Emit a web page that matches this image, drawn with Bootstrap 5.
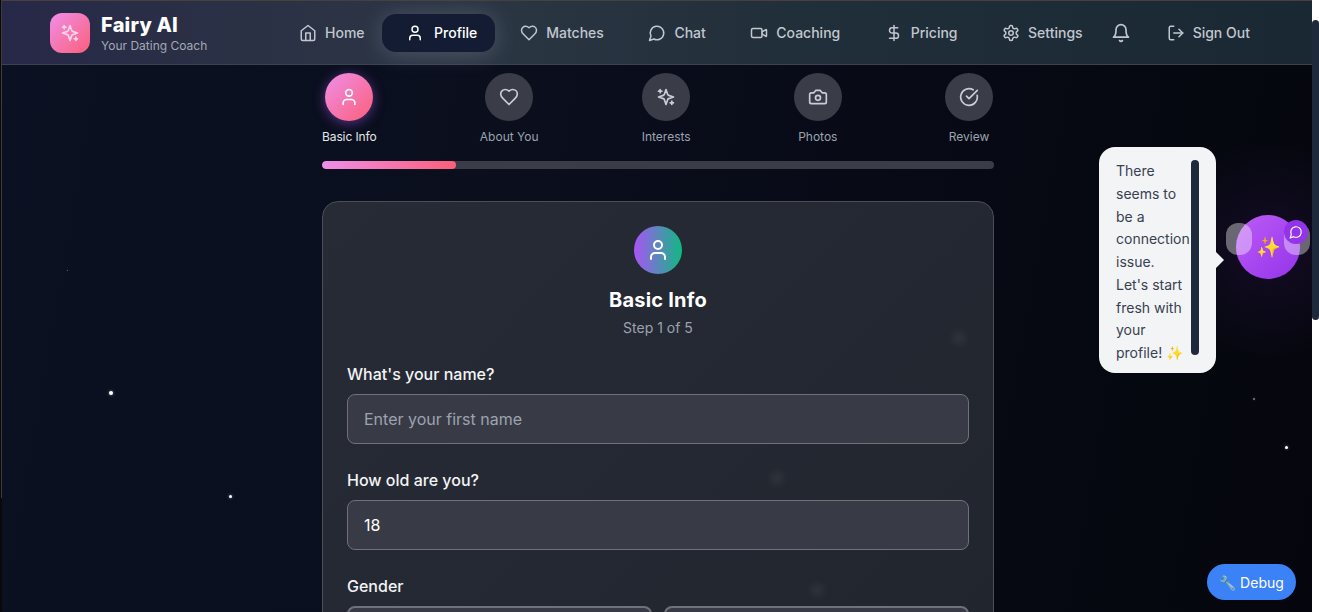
<!DOCTYPE html>
<html lang="en">
<head>
    <meta charset="UTF-8">
    <meta name="viewport" content="width=device-width, initial-scale=1.0">
    <title>Fairy AI</title>
    <link href="https://cdn.jsdelivr.net/npm/bootstrap@5.3.3/dist/css/bootstrap.min.css" rel="stylesheet">
    <style>
        html, body { height: 100%; overflow: hidden; }
        body {
            font-family: Inter, "Liberation Sans", sans-serif;
            background: linear-gradient(#3d3d3d, #3d3d3d) 1px 0 / 1px 498px no-repeat, #09090b;
            color: #fff;
        }
        .lucide { fill: none; stroke: currentColor; stroke-width: 2; stroke-linecap: round; stroke-linejoin: round; flex-shrink: 0; }
        .app-shell {
            position: relative;
            margin-left: 2px;
            width: 1312px;
            height: 612px;
            overflow: hidden;
            background:
                radial-gradient(circle at 1268px 250px, rgba(147, 51, 234, .1), transparent 110px),
                linear-gradient(100deg, #0b1122 0%, #0a0e1d 40%, #070a14 70%, #05060d 100%);
        }
        .top-bar {
            position: relative;
            z-index: 5;
            height: 65px;
            padding-left: 48px;
            border-top: 1px solid #4a3f3f;
            border-bottom: 1px solid #3d434e;
            background: linear-gradient(90deg, #272848 0%, #2a3045 16%, #2c3644 35%, #212f3a 60%, #1a2833 100%);
        }
        .brand-box { width: 226.75px; }
        .brand-logo {
            width: 40px; height: 40px; border-radius: 12px; margin-right: 3px;
            background: linear-gradient(135deg, #f08ee8, #fb5f7a);
            color: #fdd4ea;
        }
        .brand-name { margin-top: 1px; font-size: 20px; font-weight: 800; line-height: 24px; letter-spacing: .2px; }
        .brand-sub { margin-top: 1px; font-size: 12px; line-height: 16px; color: #a4a9b4; }
        .top-link {
            padding: 0 22.25px; height: 38px; gap: 8px;
            color: #c2c7cf; font-size: 14px; font-weight: 500;
        }
        .top-link.active {
            margin: 0 2.75px 0 -4.75px; padding: 0 18px 0 24px; gap: 10px;
            color: #fff; background: #131c32; border-radius: 14px;
            box-shadow: 0 2px 22px rgba(148, 163, 184, .32);
        }
        .top-bell { margin-right: 13.75px; padding: 0 0 0 5.75px; }
        .page-column { width: 672px; margin-left: 320px; padding-top: 8px; }
        .step-row { padding-right: 1px; }
        .step-dot {
            width: 48px; height: 48px; border-radius: 50%;
            background: #3a3d48; color: #c9ced6;
        }
        .step-item.current .step-dot {
            background: linear-gradient(135deg, #f08ee8, #fb5f7a); color: #fff;
            box-shadow: 0 2px 12px rgba(168, 85, 247, .5);
        }
        .step-name { margin-top: 8px; font-size: 12px; line-height: 16px; color: #9ca3af; }
        .step-item.current .step-name { color: #e5e7eb; letter-spacing: -.1px; }
        .step-progress { height: 8px; margin-top: 16px; background: #3a3d48; border-radius: 4px; }
        .step-progress .progress-bar { background: linear-gradient(90deg, #f08ee8, #fb5f7a); border-radius: 4px; }
        .form-panel {
            margin-top: 32px; padding: 24px; height: 700px;
            background: linear-gradient(135deg, #272b36, #20242c);
            border: 1px solid #4b4e58; border-radius: 16px; color: #fff;
            position: relative; z-index: 1;
        }
        .panel-icon { width: 48px; height: 48px; border-radius: 50%; background: linear-gradient(90deg, #a855f7, #10b981); }
        .panel-title { margin: 12px 0 0; font-size: 20px; font-weight: 700; line-height: 28px; letter-spacing: .2px; }
        .panel-step { margin-top: 4px; font-size: 14px; line-height: 20px; color: #9ca3af; }
        .field-group { margin-top: 24px; }
        .field-group .form-label { margin-bottom: 8px; font-weight: 500; line-height: 24px; color: #f3f4f6; }
        .field-group .form-control {
            height: 50px; padding: 12px 16px;
            background: #383b45; border: 1px solid #6f727b; border-radius: 8px;
            color: #fff; font-size: 16px;
        }
        .field-group .form-control::placeholder { color: #9ca3af; }
        .gender-row { gap: 12px; }
        .gender-btn { height: 50px; background: #383b45; border: 2px solid #6f727b; border-radius: 8px; }
        .star-dot { position: absolute; border-radius: 50%; background: #fff; box-shadow: 0 0 3px rgba(255, 255, 255, .5); }
        .star-soft { position: absolute; z-index: 2; width: 14px; height: 14px; border-radius: 50%; background: rgba(255, 255, 255, .05); filter: blur(3px); }
        .fairy-bubble {
            position: absolute; z-index: 3; left: 1097px; top: 147px;
            width: 117px; height: 226px; padding: 13px 0 0 17px;
            background: #f3f4f6; border-radius: 16px;
            color: #374151; font-size: 14px; line-height: 22.75px;
        }
        .fairy-bubble::after {
            content: ""; position: absolute; left: 100%; top: 105px;
            border: 8px solid transparent; border-left-color: #f3f4f6; border-right-width: 0;
        }
        .bubble-text { width: 72px; }
        .bubble-thumb { position: absolute; left: 92px; top: 13px; width: 8px; height: 195px; background: #1e293b; border-radius: 4px; }
        .fairy-orb {
            position: absolute; z-index: 3; left: 1234px; top: 215px;
            width: 64px; height: 64px; border-radius: 50%;
            background: linear-gradient(135deg, #bd5cf6, #9333ea);
            font-size: 20px;
        }
        .fairy-wing { position: absolute; z-index: 4; top: 223px; width: 26px; height: 32px; border-radius: 12px; background: rgba(255, 255, 255, .38); }
        .fairy-chat {
            position: absolute; z-index: 5; left: 1282px; top: 220px;
            width: 24px; height: 24px; border-radius: 50%;
            background: #9333ea; color: #fff;
        }
        .debug-btn {
            position: absolute; z-index: 6; left: 1205px; top: 564px;
            width: 89px; height: 36px; padding: 0;
            background: #3b82f6; border: 0; border-radius: 18px;
            color: #fff; font-size: 14px;
        }
        .fake-scrollbar { position: fixed; z-index: 9; top: 0; right: 0; width: 7px; height: 612px; background: #fff; }
        .fake-scrollbar div { height: 300px; margin-top: 20px; background: #1e293b; border-radius: 4px; }
    </style>
</head>
<body>

    <svg width="0" height="0" class="position-absolute">
        <symbol id="i-sparkles" viewBox="0 0 24 24"><path d="m12 3-1.912 5.813a2 2 0 0 1-1.275 1.275L3 12l5.813 1.912a2 2 0 0 1 1.275 1.275L12 21l1.912-5.813a2 2 0 0 1 1.275-1.275L21 12l-5.813-1.912a2 2 0 0 1-1.275-1.275L12 3Z"/><path d="M5 3v4"/><path d="M19 17v4"/><path d="M3 5h4"/><path d="M17 19h4"/></symbol>
        <symbol id="i-home" viewBox="0 0 24 24"><path d="m3 9 9-7 9 7v11a2 2 0 0 1-2 2H5a2 2 0 0 1-2-2z"/><polyline points="9 22 9 12 15 12 15 22"/></symbol>
        <symbol id="i-user" viewBox="0 0 24 24"><path d="M19 21v-2a4 4 0 0 0-4-4H9a4 4 0 0 0-4 4v2"/><circle cx="12" cy="7" r="4"/></symbol>
        <symbol id="i-heart" viewBox="0 0 24 24"><path d="M19 14c1.49-1.46 3-3.21 3-5.5A5.5 5.5 0 0 0 16.5 3c-1.76 0-3 .5-4.5 2-1.5-1.5-2.74-2-4.5-2A5.5 5.5 0 0 0 2 8.5c0 2.3 1.5 4.05 3 5.5l7 7Z"/></symbol>
        <symbol id="i-chat" viewBox="0 0 24 24"><path d="M7.9 20A9 9 0 1 0 4 16.1L2 22Z"/></symbol>
        <symbol id="i-video" viewBox="0 0 24 24"><path d="m16 13 5.223 3.482a.5.5 0 0 0 .777-.416V7.87a.5.5 0 0 0-.752-.432L16 10.5"/><rect x="2" y="6" width="14" height="12" rx="2"/></symbol>
        <symbol id="i-dollar" viewBox="0 0 24 24"><line x1="12" x2="12" y1="2" y2="22"/><path d="M17 5H9.5a3.5 3.5 0 0 0 0 7h5a3.5 3.5 0 0 1 0 7H6"/></symbol>
        <symbol id="i-gear" viewBox="0 0 24 24"><path d="M12.22 2h-.44a2 2 0 0 0-2 2v.18a2 2 0 0 1-1 1.73l-.43.25a2 2 0 0 1-2 0l-.15-.08a2 2 0 0 0-2.73.73l-.22.38a2 2 0 0 0 .73 2.73l.15.1a2 2 0 0 1 1 1.72v.51a2 2 0 0 1-1 1.74l-.15.09a2 2 0 0 0-.73 2.73l.22.38a2 2 0 0 0 2.73.73l.15-.08a2 2 0 0 1 2 0l.43.25a2 2 0 0 1 1 1.73V20a2 2 0 0 0 2 2h.44a2 2 0 0 0 2-2v-.18a2 2 0 0 1 1-1.73l.43-.25a2 2 0 0 1 2 0l.15.08a2 2 0 0 0 2.73-.73l.22-.39a2 2 0 0 0-.73-2.73l-.15-.08a2 2 0 0 1-1-1.74v-.5a2 2 0 0 1 1-1.74l.15-.09a2 2 0 0 0 .73-2.73l-.22-.38a2 2 0 0 0-2.73-.73l-.15.08a2 2 0 0 1-2 0l-.43-.25a2 2 0 0 1-1-1.73V4a2 2 0 0 0-2-2z"/><circle cx="12" cy="12" r="3"/></symbol>
        <symbol id="i-bell" viewBox="0 0 24 24"><path d="M6 8a6 6 0 0 1 12 0c0 7 3 9 3 9H3s3-2 3-9"/><path d="M10.3 21a1.94 1.94 0 0 0 3.4 0"/></symbol>
        <symbol id="i-logout" viewBox="0 0 24 24"><path d="M9 21H5a2 2 0 0 1-2-2V5a2 2 0 0 1 2-2h4"/><polyline points="16 17 21 12 16 7"/><line x1="21" x2="9" y1="12" y2="12"/></symbol>
        <symbol id="i-camera" viewBox="0 0 24 24"><path d="M14.5 4h-5L7 7H4a2 2 0 0 0-2 2v9a2 2 0 0 0 2 2h16a2 2 0 0 0 2-2V9a2 2 0 0 0-2-2h-3l-2.5-3z"/><circle cx="12" cy="13" r="3"/></symbol>
        <symbol id="i-check" viewBox="0 0 24 24"><path d="M21.801 10A10 10 0 1 1 17 3.335"/><path d="m9 11 3 3L22 4"/></symbol>
    </svg>

    <div class="app-shell">
        <!-- background stars -->
        <span class="star-dot" style="left:107px;top:391px;width:4px;height:4px"></span>
        <span class="star-dot" style="left:227px;top:495px;width:3px;height:3px"></span>
        <span class="star-dot" style="left:1283px;top:446px;width:3px;height:3px"></span>
        <span class="star-dot" style="left:1251px;top:398px;width:2px;height:2px;opacity:.5"></span>
        <span class="star-dot" style="left:65px;top:270px;width:1px;height:1px;opacity:.4"></span>
        <span class="star-soft" style="left:950px;top:331px"></span>
        <span class="star-soft" style="left:768px;top:471px"></span>
        <span class="star-soft" style="left:808px;top:583px"></span>

        <nav class="top-bar d-flex align-items-center">
            <a class="brand-box d-flex align-items-center gap-2 text-decoration-none text-white" href="#">
                <span class="brand-logo d-flex align-items-center justify-content-center">
                    <svg class="lucide" width="20" height="20"><use href="#i-sparkles"/></svg>
                </span>
                <span class="d-flex flex-column">
                    <span class="brand-name">Fairy AI</span>
                    <span class="brand-sub">Your Dating Coach</span>
                </span>
            </a>
            <div class="nav flex-nowrap align-items-center">
                <a class="nav-link top-link d-flex align-items-center" href="#"><svg class="lucide" width="18" height="18"><use href="#i-home"/></svg>Home</a>
                <a class="nav-link top-link active d-flex align-items-center" href="#"><svg class="lucide" width="18" height="18"><use href="#i-user"/></svg>Profile</a>
                <a class="nav-link top-link d-flex align-items-center" href="#"><svg class="lucide" width="18" height="18"><use href="#i-heart"/></svg>Matches</a>
                <a class="nav-link top-link d-flex align-items-center" href="#"><svg class="lucide" width="18" height="18"><use href="#i-chat"/></svg>Chat</a>
                <a class="nav-link top-link d-flex align-items-center" href="#"><svg class="lucide" width="18" height="18"><use href="#i-video"/></svg>Coaching</a>
                <a class="nav-link top-link d-flex align-items-center" href="#"><svg class="lucide" width="18" height="18"><use href="#i-dollar"/></svg>Pricing</a>
                <a class="nav-link top-link d-flex align-items-center" href="#"><svg class="lucide" width="18" height="18"><use href="#i-gear"/></svg>Settings</a>
                <a class="nav-link top-link top-bell d-flex align-items-center" href="#"><svg class="lucide" width="20" height="20"><use href="#i-bell"/></svg></a>
                <a class="nav-link top-link d-flex align-items-center" href="#"><svg class="lucide" width="18" height="18"><use href="#i-logout"/></svg>Sign Out</a>
            </div>
        </nav>

        <main class="page-column">
            <div class="step-row d-flex justify-content-between">
                <div class="step-item current d-flex flex-column align-items-center">
                    <span class="step-dot d-flex align-items-center justify-content-center"><svg class="lucide" width="20" height="20"><use href="#i-user"/></svg></span>
                    <span class="step-name">Basic Info</span>
                </div>
                <div class="step-item d-flex flex-column align-items-center">
                    <span class="step-dot d-flex align-items-center justify-content-center"><svg class="lucide" width="20" height="20"><use href="#i-heart"/></svg></span>
                    <span class="step-name">About You</span>
                </div>
                <div class="step-item d-flex flex-column align-items-center">
                    <span class="step-dot d-flex align-items-center justify-content-center"><svg class="lucide" width="20" height="20"><use href="#i-sparkles"/></svg></span>
                    <span class="step-name">Interests</span>
                </div>
                <div class="step-item d-flex flex-column align-items-center">
                    <span class="step-dot d-flex align-items-center justify-content-center"><svg class="lucide" width="20" height="20"><use href="#i-camera"/></svg></span>
                    <span class="step-name">Photos</span>
                </div>
                <div class="step-item d-flex flex-column align-items-center">
                    <span class="step-dot d-flex align-items-center justify-content-center"><svg class="lucide" width="20" height="20"><use href="#i-check"/></svg></span>
                    <span class="step-name">Review</span>
                </div>
            </div>
            <div class="progress step-progress">
                <div class="progress-bar" style="width: 20%"></div>
            </div>

            <div class="card form-panel">
                <div class="d-flex flex-column align-items-center">
                    <span class="panel-icon d-flex align-items-center justify-content-center"><svg class="lucide" width="24" height="24"><use href="#i-user"/></svg></span>
                    <h2 class="panel-title">Basic Info</h2>
                    <div class="panel-step">Step 1 of 5</div>
                </div>
                <div class="field-group">
                    <label class="form-label d-block" for="firstName">What's your name?</label>
                    <input id="firstName" class="form-control" type="text" placeholder="Enter your first name">
                </div>
                <div class="field-group">
                    <label class="form-label d-block" for="age">How old are you?</label>
                    <input id="age" class="form-control" type="text" value="18">
                </div>
                <div class="field-group">
                    <label class="form-label d-block">Gender</label>
                    <div class="gender-row d-flex">
                        <button class="btn gender-btn flex-fill w-50" type="button"></button>
                        <button class="btn gender-btn flex-fill w-50" type="button"></button>
                    </div>
                </div>
            </div>
        </main>

        <div class="fairy-bubble">
            <div class="bubble-text">There seems to be a connection issue. Let's start fresh with your profile! ✨</div>
            <div class="bubble-thumb"></div>
        </div>
        <div class="fairy-orb d-flex align-items-center justify-content-center">✨</div>
        <span class="fairy-wing" style="left:1224px"></span>
        <span class="fairy-wing" style="left:1282px"></span>
        <span class="fairy-chat d-flex align-items-center justify-content-center"><svg class="lucide" width="14" height="14"><use href="#i-chat"/></svg></span>
        <button class="btn debug-btn" type="button">🔧 Debug</button>
    </div>

    <div class="fake-scrollbar"><div></div></div>

    <script src="https://cdn.jsdelivr.net/npm/bootstrap@5.3.3/dist/js/bootstrap.bundle.min.js"></script>
</body>
</html>
